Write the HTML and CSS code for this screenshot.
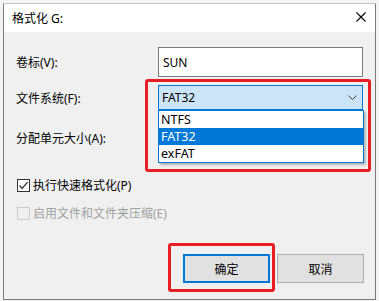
FILE: index.html
```html
<!DOCTYPE html>
<html lang="zh-CN">
<head>
<meta charset="UTF-8" />
<meta name="viewport" content="width=device-width, initial-scale=1" />
<title>格式化 G:</title>
<link rel="stylesheet" href="styles.css">
</head>
<body>

<div class="dialog">
  <div class="titlebar">
    <span class="title">格式化 G:</span>
    <svg class="close" width="10" height="10" viewBox="0 0 10 10">
      <path d="M0.5 0.5 L9.5 9.5 M9.5 0.5 L0.5 9.5" stroke="#000" stroke-width="1.1" fill="none" />
    </svg>
  </div>

  <div class="content">
    <div class="row row-volume">
      <label class="label">卷标(V):</label>
      <div class="textbox">SUN</div>
    </div>

    <div class="row row-fs">
      <label class="label">文件系统(F):</label>
      <div class="combo">
        <span>FAT32</span>
        <svg class="chevron" width="9" height="5" viewBox="0 0 9 5">
          <path d="M0.5 0.5 L4.5 4.5 L8.5 0.5" stroke="#333" stroke-width="1" fill="none" />
        </svg>
        <ul class="dropdown">
          <li>NTFS</li>
          <li class="selected">FAT32</li>
          <li>exFAT</li>
        </ul>
        <div class="highlight hl-combo"></div>
      </div>
    </div>

    <div class="row row-unit">
      <label class="label">分配单元大小(A):</label>
    </div>

    <div class="check-row row-quick">
      <span class="checkbox checked">
        <svg width="11" height="11" viewBox="0 0 11 11">
          <path d="M1.5 5.5 L4.2 8.3 L9.6 2.2" stroke="#222" stroke-width="1.2" fill="none" />
        </svg>
      </span>
      <span>执行快速格式化(P)</span>
    </div>

    <div class="check-row row-compress disabled">
      <span class="checkbox"></span>
      <span>启用文件和文件夹压缩(E)</span>
    </div>

    <div class="buttons">
      <button class="btn btn-default">确定
        <span class="highlight hl-ok"></span>
      </button>
      <button class="btn">取消</button>
    </div>
  </div>
</div>

</body>
</html>
```

FILE: styles.css
```css
* {
  box-sizing: border-box;
}
body {
  margin: 0;
  padding: 3px 0 0 3px;
  background: #f4f4f4;
  font-family: "Noto Sans", "Noto Sans CJK SC", sans-serif;
  font-size: 12px;
  color: #000;
}
.dialog {
  width: 373px;
  height: 297px;
  border: 1px solid #7a7a7a;
  border-top-color: #c8c8c8;
  background: #f0f0f0;
  display: flex;
  flex-direction: column;
}
.titlebar {
  height: 28px;
  background: #fff;
  display: flex;
  align-items: center;
  justify-content: space-between;
  padding: 0 9px 0 8px;
}
.title {
  font-size: 12px;
  margin-top: -1px;
}
.close {
  display: block;
  margin-top: -2px;
}
.content {
  display: flex;
  flex-direction: column;
  padding: 0 11px 0 12px;
}
.row {
  display: flex;
  align-items: center;
}
.label {
  width: 142px;
  flex: none;
}
.row-volume {
  margin-top: 15px;
  height: 30px;
}
.textbox {
  width: 205px;
  height: 30px;
  border: 1px solid #7a7a7a;
  background: #fff;
  padding: 0 4px;
  display: flex;
  align-items: center;
}
.row-fs {
  margin-top: 8px;
  height: 25px;
}
.combo {
  position: relative;
  width: 205px;
  height: 25px;
  border: 1px solid #0078d7;
  background: #cce4f7;
  padding: 0 3px;
  display: flex;
  align-items: center;
  justify-content: space-between;
}
.chevron {
  display: block;
  margin-right: 2px;
}
.dropdown {
  position: absolute;
  top: 24px;
  left: -1px;
  width: 206px;
  margin: 0;
  padding: 0;
  list-style: none;
  background: #fff;
  border: 1px solid #0078d7;
  box-shadow: 2px 2px 2px rgb(0 0 0 / 0.25);
  z-index: 2;
}
.dropdown li {
  height: 17px;
  line-height: 17px;
  padding-left: 2px;
  font-size: 12.5px;
}
.dropdown li.selected {
  background: #0078d7;
  color: #fff;
}
.highlight {
  position: absolute;
  border: 3px solid #e81e25;
  border-radius: 3px;
  z-index: 3;
  pointer-events: none;
}
.hl-combo {
  left: -14px;
  top: -7px;
  width: 226px;
  height: 93px;
}
.row-unit {
  margin-top: 15px;
  height: 25px;
}
.check-row {
  display: flex;
  align-items: center;
  gap: 3px;
  height: 16px;
  padding-left: 1px;
}
.row-quick {
  margin-top: 27px;
}
.row-compress {
  margin-top: 12px;
}
.checkbox {
  width: 13px;
  height: 13px;
  border: 1px solid #333;
  background: #fff;
  display: flex;
  align-items: center;
  justify-content: center;
}
.disabled {
  color: #a0a0a0;
}
.disabled .checkbox {
  border-color: #cccccc;
  background: #f0f0f0;
}
.buttons {
  margin-top: 33px;
  display: flex;
  justify-content: flex-end;
  gap: 7px;
}
.btn {
  position: relative;
  width: 87px;
  height: 29px;
  background: #e1e1e1;
  border: 1px solid #adadad;
  font-family: inherit;
  font-size: 12px;
  color: #000;
  padding: 0;
}
.btn-default {
  border: 2px solid #0078d7;
}
.hl-ok {
  left: -17px;
  top: -13px;
  width: 107px;
  height: 49px;
}
```
